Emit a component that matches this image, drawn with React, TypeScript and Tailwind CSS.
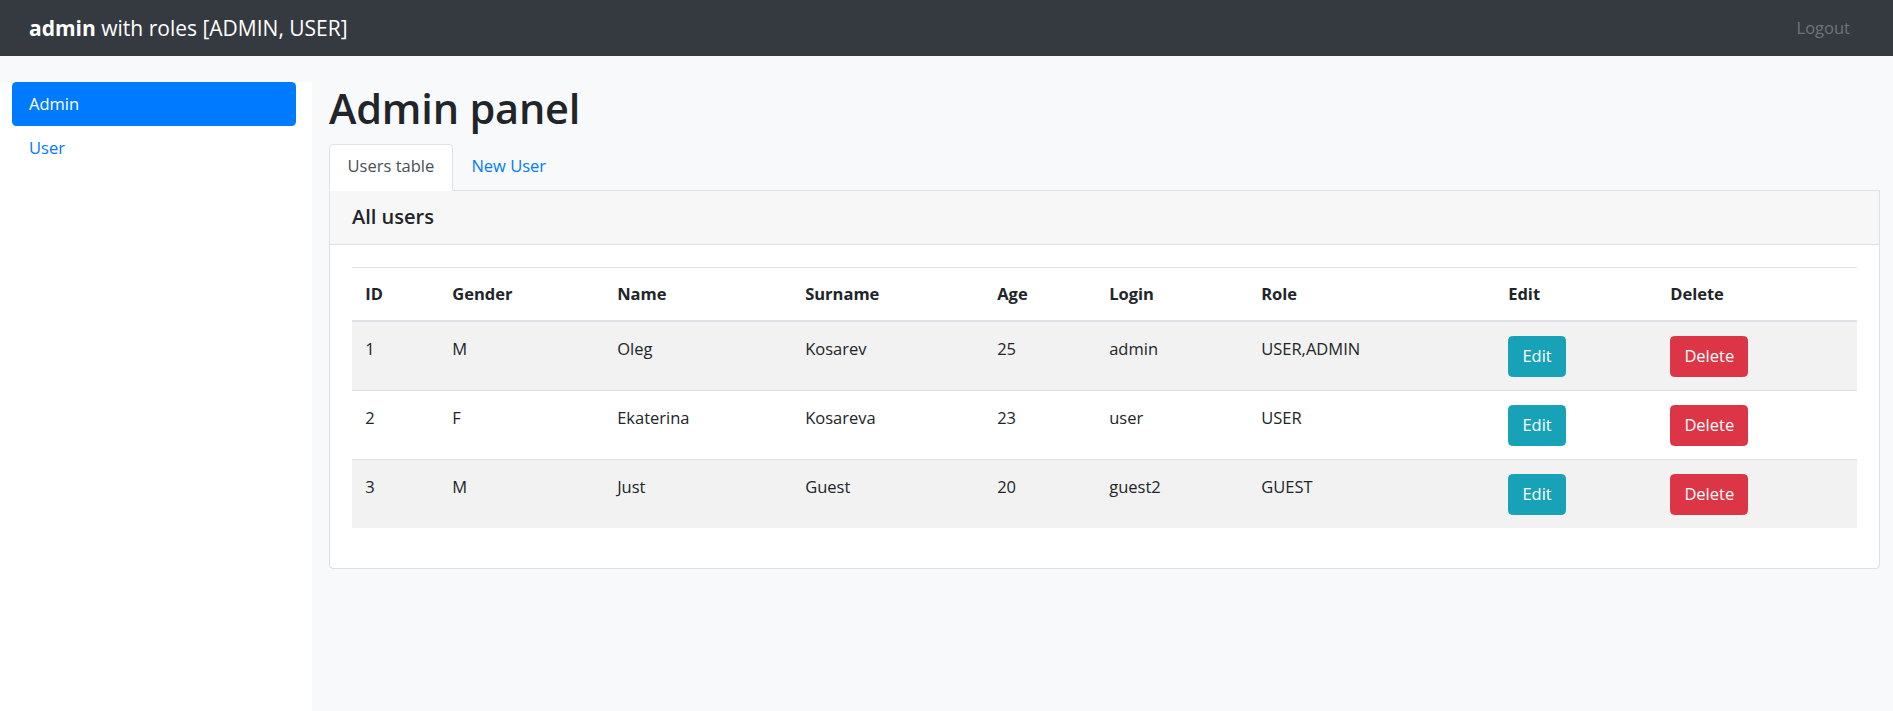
import React from "react";

type User = {
  id: number;
  gender: string;
  name: string;
  surname: string;
  age: number;
  login: string;
  role: string;
};

const users: User[] = [
  { id: 1, gender: "M", name: "Oleg", surname: "Kosarev", age: 25, login: "admin", role: "USER,ADMIN" },
  { id: 2, gender: "F", name: "Ekaterina", surname: "Kosareva", age: 23, login: "user", role: "USER" },
  { id: 3, gender: "M", name: "Just", surname: "Guest", age: 20, login: "guest2", role: "GUEST" },
];

// column widths measured from the table, last one takes the rest
const columns = [
  { label: "ID", width: "w-[87px]" },
  { label: "Gender", width: "w-[165px]" },
  { label: "Name", width: "w-[188px]" },
  { label: "Surname", width: "w-[192px]" },
  { label: "Age", width: "w-[112px]" },
  { label: "Login", width: "w-[152px]" },
  { label: "Role", width: "w-[247px]" },
  { label: "Edit", width: "w-[162px]" },
  { label: "Delete", width: "" },
];

const cell = "px-[13.2px] py-[13.2px] align-top leading-[26.4px] text-left";

export default function App() {
  return (
    <div
      className="flex h-screen flex-col bg-[#f8f9fa] text-[16.5px] text-[#212529]"
      style={{ fontFamily: '"Open Sans", "Noto Sans", sans-serif' }}
    >
      <header className="flex h-[56px] shrink-0 items-center justify-between bg-[#343a40] pl-[29px] pr-[43px]">
        <div className="text-[21px] leading-none text-white">
          <span className="font-bold">admin</span> with roles [ADMIN, USER]
        </div>
        <a href="#" className="text-[16.5px] text-[#6c757d]">
          Logout
        </a>
      </header>

      <div className="flex min-h-0 flex-1 pt-[26px]">
        <aside className="w-[312px] shrink-0 bg-white pl-[12px] pr-[16px]">
          <nav className="flex flex-col">
            <a href="#" className="rounded-[4.4px] bg-[#007bff] px-[17px] py-[8.8px] leading-[26.4px] text-white">
              Admin
            </a>
            <a href="#" className="px-[17px] py-[8.8px] leading-[26.4px] text-[#007bff]">
              User
            </a>
          </nav>
        </aside>

        <main className="min-w-0 flex-1 pl-[17px] pr-[13px]">
          <h1 className="mb-[8.8px] text-[41.5px] font-semibold leading-[52.8px] tracking-[-0.2px]">Admin panel</h1>

          <div className="flex border-b border-[#dee2e6]">
            <a
              href="#"
              className="-mb-px rounded-t-[4.4px] border border-[#dee2e6] border-b-white bg-white px-[17.6px] py-[8.8px] leading-[26.4px] text-[#495057]"
            >
              Users table
            </a>
            <a href="#" className="border border-transparent px-[17.6px] py-[8.8px] leading-[26.4px] text-[#007bff]">
              New User
            </a>
          </div>

          <section className="rounded-b-[4.4px] border border-t-0 border-[#dfdfdf] bg-white">
            <div className="flex h-[54px] items-center border-b border-[#dfdfdf] bg-[#f7f7f7] px-[22px]">
              <h5 className="text-[20px] font-semibold leading-[26.4px]">All users</h5>
            </div>
            <div className="p-[22px]">
              <table className="mb-[17.6px] w-full table-fixed border-collapse">
                <thead>
                  <tr>
                    {columns.map((c) => (
                      <th
                        key={c.label}
                        className={`${cell} ${c.width} border-t border-b-2 border-[#dee2e6] font-bold`}
                      >
                        {c.label}
                      </th>
                    ))}
                  </tr>
                </thead>
                <tbody>
                  {users.map((u, i) => (
                    <tr key={u.id} className={i % 2 === 0 ? "bg-[#f2f2f2]" : "bg-white"}>
                      {[u.id, u.gender, u.name, u.surname, u.age, u.login, u.role].map((v, j) => (
                        <td key={j} className={`${cell} ${i > 0 ? "border-t border-[#dee2e6]" : ""}`}>
                          {v}
                        </td>
                      ))}
                      <td className={`${cell} ${i > 0 ? "border-t border-[#dee2e6]" : ""}`}>
                        <button className="block h-[41.6px] rounded-[4.4px] border border-[#17a2b8] bg-[#17a2b8] px-[13.2px] leading-[26.4px] text-white">
                          Edit
                        </button>
                      </td>
                      <td className={`${cell} ${i > 0 ? "border-t border-[#dee2e6]" : ""}`}>
                        <button className="block h-[41.6px] rounded-[4.4px] border border-[#dc3545] bg-[#dc3545] px-[13.2px] leading-[26.4px] text-white">
                          Delete
                        </button>
                      </td>
                    </tr>
                  ))}
                </tbody>
              </table>
            </div>
          </section>
        </main>
      </div>
    </div>
  );
}
